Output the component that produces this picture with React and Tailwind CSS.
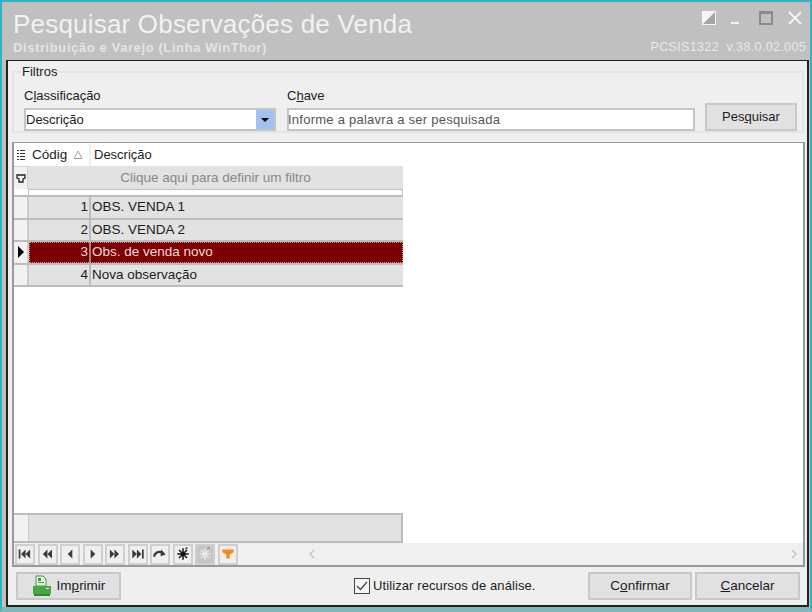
import React from 'react';

const rows = [
  { id: 1, text: 'OBS. VENDA 1' },
  { id: 2, text: 'OBS. VENDA 2' },
  { id: 3, text: 'Obs. de venda novo', active: true },
  { id: 4, text: 'Nova observação' },
];

const NavIcon = ({ children, disabled }) => (
  <div className={`w-5 h-[21px] border-2 border-[#cfcfcf] flex items-center justify-center ${disabled ? 'bg-[#c6c6c6]' : 'bg-[#efefef]'}`}>
    <svg width="16" height="16" viewBox="0 0 14 14">{children}</svg>
  </div>
);

const Left = ({ x }) => <path d={`M${x + 4} 3 L${x} 7 L${x + 4} 11 Z`} fill="#3a3a3a" />;
const Right = ({ x }) => <path d={`M${x} 3 L${x + 4} 7 L${x} 11 Z`} fill="#3a3a3a" />;

const Star = ({ color, accent }) => (
  <g stroke={color} strokeWidth="1.3">
    <path d="M7 2V12M2 7H12M3.5 3.5L10.5 10.5M10.5 3.5L3.5 10.5" />
    <circle cx="7" cy="7" r="2" fill={color} stroke="none" />
    <path d="M9 2.5L11 1.5" stroke={accent} />
  </g>
);

const Btn = ({ className, children }) => (
  <button className={`h-[28px] bg-[#e1e1e1] border-2 border-[#c8c8c8] flex items-center justify-center text-[13.5px] text-[#1c1c1c] ${className}`}>
    {children}
  </button>
);

const App = () => {
  return (
    <div className="w-[812px] h-[612px] bg-[#c0c0c0] border-2 border-[#2fb4c4] border-b-[5px] border-b-[#7fb8bd] flex flex-col overflow-hidden font-['Liberation_Sans',sans-serif] text-[#1c1c1c]">
      <header className="h-[58px] shrink-0 flex justify-between pl-[11px] pr-[4px]">
        <div>
          <h1 className="mt-[8px] text-[26px] leading-[28px] tracking-[0.2px] text-[#f2f2f2]">Pesquisar Observações de Venda</h1>
          <div className="mt-[3px] text-[13px] leading-[14px] font-bold tracking-[0.6px] text-[#e4e4e4]">Distribuição e Varejo (Linha WinThor)</div>
        </div>
        <div className="flex flex-col items-end">
          <div className="mt-[6px] flex items-center h-[20px] gap-[15px] pr-[4px]">
            <svg width="14" height="14" viewBox="0 0 14 14">
              <rect width="14" height="14" fill="#f5f5f5" />
              <path d="M13 1V13H1Z" fill="#a6a6a6" />
            </svg>
            <div className="w-[8px] h-[2px] bg-[#f2f2f2] mt-[10px]" />
            <div className="w-[14px] h-[14px] border-2 border-t-[3px] border-[#8a8a8a] ml-[5px]" />
            <svg width="14" height="14" viewBox="0 0 14 14" stroke="#f5f5f5" strokeWidth="2">
              <path d="M1 1L13 13M13 1L1 13" />
            </svg>
          </div>
          <div className="mt-[12px] text-[12.5px] leading-[14px] tracking-[0.35px] text-[#e8e8e8]">PCSIS1322&nbsp;&nbsp;v.38.0.02.005</div>
        </div>
      </header>

      <main className="flex-1 ml-[4px] mr-[1px] border-2 border-[#222] border-t-[1px] bg-[#efefef] flex flex-col pl-[4px] pr-[3px]">
        <fieldset className="mt-[10px] h-[62px] border-2 border-[#e4e4e4] relative shrink-0">
          <span className="absolute left-[7px] -top-[8px] bg-[#efefef] px-[1px] text-[13px] leading-[14px]">Filtros</span>
          <div className="flex pl-[10px] pt-[15px]">
            <div className="w-[252px] mr-[11px]">
              <div className="text-[13px] leading-[16px] mb-[4px]">C<span className="underline">l</span>assificação</div>
              <div className="h-[23px] bg-white border-2 border-[#c4c4c4] flex items-center justify-between">
                <span className="text-[13px]">Descrição</span>
                <div className="w-[18px] h-[19px] bg-[#a3c1ef] flex items-center justify-center">
                  <div className="w-0 h-0 border-x-[4px] border-x-transparent border-t-[4px] border-t-black" />
                </div>
              </div>
            </div>
            <div className="w-[408px] mr-[10px]">
              <div className="text-[13px] leading-[16px] mb-[4px]">C<span className="underline">h</span>ave</div>
              <div className="h-[23px] bg-white border-2 border-[#c4c4c4] flex items-center text-[13px] tracking-[0.25px] text-[#555]">
                <span className="-ml-[1px]">Informe a palavra a ser pesquisada</span>
              </div>
            </div>
            <Btn className="w-[92px] mt-[15px]">
              <span className="text-[13px]">Pes<span className="underline">q</span>uisar</span>
            </Btn>
          </div>
        </fieldset>

        <section className="mt-[9px] h-[425px] shrink-0 border-2 border-[#9a9a9a] border-t-[1px] bg-white flex flex-col mr-[-1px]">
          <div className="flex-1 min-h-0">
            <div className="w-[389px]">
              <div className="h-[23px] pt-[1px] flex text-[13px] items-center bg-white">
                <div className="w-[14px] flex justify-center">
                  <svg width="8" height="12" viewBox="0 0 8 12" fill="#333">
                    <path d="M0 1H2V2H0ZM3 1H8V2H3ZM0 4H2V5H0ZM3 4H8V5H3ZM0 7H2V8H0ZM3 7H8V8H3ZM0 10H2V11H0ZM3 10H8V11H3Z" />
                  </svg>
                </div>
                <div className="w-[63px] pl-[4px] flex items-center border-r-2 border-[#efefef] h-full text-[13.5px]">
                  Códig
                  <svg className="ml-[6px]" width="10" height="10" viewBox="0 0 10 10" fill="none" stroke="#a0a0a0"><path d="M5 1L9 8.5H1Z" /></svg>
                </div>
                <div className="pl-[3px]">Descrição</div>
              </div>
              <div className="h-[23px] flex">
                <div className="w-[14px] flex items-center justify-center bg-[#f2f2f2] border-r border-t border-[#d0d0d0]">
                  <svg width="10" height="12" viewBox="0 0 10 12" fill="none" stroke="#222" strokeWidth="1.3"><path d="M1 3H9V6L7 7V10H3V7L1 6Z" /></svg>
                </div>
                <div className="flex-1 bg-[#e2e2e2] text-center text-[13.5px] leading-[23px] text-[#888]">Clique aqui para definir um filtro</div>
              </div>
              <div className="h-[6px] border-x border-t border-[#c0c0c0] ml-[14px]" />
              <div className="border-b-2 border-[#bcbcbc]">
                {rows.map((row) => (
                  <div key={row.id} className="h-[22.5px] flex text-[13.5px] border-t-2 border-[#bcbcbc]">
                    <div className="w-[15px] flex items-center justify-center bg-[#f2f2f2] border-r-2 border-[#cccccc]">
                      {row.active && <div className="w-0 h-0 border-y-[6px] border-y-transparent border-l-[6px] border-l-black" />}
                    </div>
                    <div className={`flex flex-1 ${row.active ? 'outline-1 outline-dotted -outline-offset-1 outline-[#b9a0a0]' : ''}`}>
                      <div className={`w-[62px] text-right pr-[1px] leading-[20px] border-r-2 ${row.active ? 'bg-[#7d0000] text-[#f0dcdc] border-[#a58080]' : 'bg-[#e2e2e2] border-[#bcbcbc]'}`}>{row.id}</div>
                      <div className={`flex-1 pl-[1px] leading-[20px] ${row.active ? 'bg-[#7d0000] text-[#f0dcdc]' : 'bg-[#e2e2e2]'}`}>{row.text}</div>
                    </div>
                  </div>
                ))}
              </div>
            </div>
          </div>

          <div className="h-[30px] w-[389px] flex border-2 border-[#bcbcbc] border-l-0 shrink-0">
            <div className="w-[15px] bg-[#f2f2f2] border-r border-[#cccccc]" />
            <div className="flex-1 bg-[#e2e2e2]" />
          </div>

          <div className="h-[22px] bg-[#f0f0f0] flex items-center pl-[1px] gap-[2.5px] shrink-0">
            <NavIcon><path d="M1.5 3H3V11H1.5Z" fill="#3a3a3a" /><Left x={3.5} /><Left x={7.5} /></NavIcon>
            <NavIcon><Left x={2.5} /><Left x={6.5} /></NavIcon>
            <NavIcon><Left x={5} /></NavIcon>
            <NavIcon><Right x={5} /></NavIcon>
            <NavIcon><Right x={2.5} /><Right x={6.5} /></NavIcon>
            <NavIcon><Right x={2} /><Right x={6} /><path d="M10.5 3H12V11H10.5Z" fill="#3a3a3a" /></NavIcon>
            <NavIcon><path d="M2 9.5C2 6 5 4.5 9 5.5" fill="none" stroke="#3a3a3a" strokeWidth="2" /><path d="M8 3L12 7.5L7.5 9Z" fill="#3a3a3a" /></NavIcon>
            <NavIcon><Star color="#111" accent="#3344bb" /></NavIcon>
            <NavIcon disabled><Star color="#e8e8e8" accent="#8a8a9a" /></NavIcon>
            <NavIcon><path d="M2 3H12V5.5L8.5 7.5V11H5.5V7.5L2 5.5Z" fill="#f28c1e" /></NavIcon>
            <div className="flex-1 flex justify-between pl-[68px] pr-[5px]">
              <svg width="8" height="10" viewBox="0 0 8 10" fill="none" stroke="#c6c6c6" strokeWidth="1.5"><path d="M6 1L2 5L6 9" /></svg>
              <svg width="8" height="10" viewBox="0 0 8 10" fill="none" stroke="#c6c6c6" strokeWidth="1.5"><path d="M2 1L6 5L2 9" /></svg>
            </div>
          </div>
        </section>

        <div className="mt-[5px] flex items-center pl-[4px] pr-[4px]">
          <Btn className="w-[105px] gap-[5px]">
            <svg width="20" height="22" viewBox="0 0 20 22">
              <path d="M4 1H11L14 4V11H4Z" fill="#e9f7e6" stroke="#3e9a3a" />
              <rect x="6" y="3" width="3" height="3" fill="#3e9a3a" />
              <rect x="6" y="7" width="6" height="1" fill="#3e9a3a" />
              <rect x="1" y="11" width="18" height="8" fill="#47a843" />
              <rect x="2" y="19" width="16" height="2" fill="#2f8a2f" />
              <rect x="14" y="13" width="3" height="1" fill="#e8f5e6" />
            </svg>
            <span>Im<span className="underline">p</span>rimir</span>
          </Btn>
          <label className="ml-[233px] flex items-center text-[13px] tracking-[0.1px]">
            <span className="w-[16px] h-[16px] border border-[#444] bg-[#f6f6f6] flex items-center justify-center mr-[3px]">
              <svg width="12" height="10" viewBox="0 0 12 10" fill="none" stroke="#444" strokeWidth="1.3"><path d="M1 5L4.5 8.5L11 1" /></svg>
            </span>
            Utilizar recursos de análise.
          </label>
          <Btn className="w-[104px] ml-auto mr-[3px]"><span>C<span className="underline">o</span>nfirmar</span></Btn>
          <Btn className="w-[105px]"><span><span className="underline">C</span>ancelar</span></Btn>
        </div>
      </main>
    </div>
  );
};

export default App;
